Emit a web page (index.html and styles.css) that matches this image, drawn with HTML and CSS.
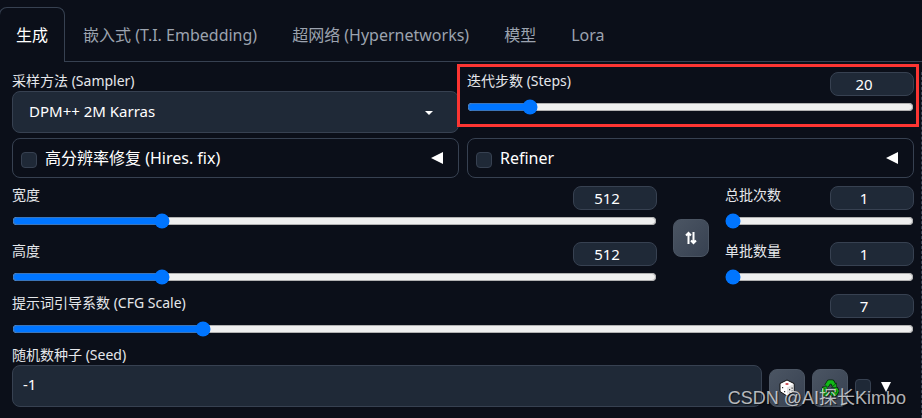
FILE: index.html
```html
<!DOCTYPE html>
<html lang="zh-CN">
<head>
<meta charset="utf-8">
<meta name="viewport" content="width=device-width, initial-scale=1">
<title>生成</title>
<link rel="stylesheet" href="styles.css">
</head>
<body>
<nav class="tabs">
  <button type="button" class="tab tab-active">生成</button>
  <button type="button" class="tab">嵌入式 (T.I. Embedding)</button>
  <button type="button" class="tab">超网络 (Hypernetworks)</button>
  <button type="button" class="tab">模型</button>
  <button type="button" class="tab">Lora</button>
</nav>
<main class="panel">
  <div class="halves">
    <div class="field">
      <label class="label" for="sampler">采样方法 (Sampler)</label>
      <div class="select-wrap">
        <select id="sampler" class="box select"><option>DPM++ 2M Karras</option></select>
        <svg class="caret" viewBox="0 0 8 4" aria-hidden="true"><path d="M0 0h8L4 4z"/></svg>
      </div>
    </div>
    <div class="slider highlighted">
      <div class="slider-head">
        <label class="label" for="steps">迭代步数 (Steps)</label>
        <input class="number" type="number" value="20" aria-label="迭代步数 (Steps)">
      </div>
      <input id="steps" class="range" type="range" min="1" max="150" value="20">
    </div>
  </div>

  <div class="halves accordions">
    <div class="accordion">
      <input id="hires" class="check" type="checkbox">
      <label class="accordion-label" for="hires">高分辨率修复 (Hires. fix)</label>
      <svg class="arrow" viewBox="0 0 12 12" aria-hidden="true"><path d="M12 0v12L0 6z"/></svg>
    </div>
    <div class="accordion">
      <input id="refiner" class="check" type="checkbox">
      <label class="accordion-label" for="refiner">Refiner</label>
      <svg class="arrow" viewBox="0 0 12 12" aria-hidden="true"><path d="M12 0v12L0 6z"/></svg>
    </div>
  </div>

  <div class="dimensions">
    <div class="stack stack-size">
      <div class="slider">
        <div class="slider-head">
          <label class="label" for="width">宽度</label>
          <input class="number" type="number" value="512" aria-label="宽度">
        </div>
        <input id="width" class="range" type="range" min="64" max="2048" step="8" value="512">
      </div>
      <div class="slider">
        <div class="slider-head">
          <label class="label" for="height">高度</label>
          <input class="number" type="number" value="512" aria-label="高度">
        </div>
        <input id="height" class="range" type="range" min="64" max="2048" step="8" value="512">
      </div>
    </div>
    <button type="button" class="tool" aria-label="⇅">
      <svg class="swap" viewBox="0 0 14 14" aria-hidden="true"><path d="M4.500 13V2M2 4.500L4.500 2 7 4.500M9.500 1v11M7 9.500L9.500 12 12 9.500"/></svg>
    </button>
    <div class="stack stack-batch">
      <div class="slider">
        <div class="slider-head">
          <label class="label" for="count">总批次数</label>
          <input class="number" type="number" value="1" aria-label="总批次数">
        </div>
        <input id="count" class="range" type="range" min="1" max="100" value="1">
      </div>
      <div class="slider">
        <div class="slider-head">
          <label class="label" for="size">单批数量</label>
          <input class="number" type="number" value="1" aria-label="单批数量">
        </div>
        <input id="size" class="range" type="range" min="1" max="8" value="1">
      </div>
    </div>
  </div>

  <div class="slider">
    <div class="slider-head">
      <label class="label" for="cfg">提示词引导系数 (CFG Scale)</label>
      <input class="number" type="number" value="7" aria-label="提示词引导系数 (CFG Scale)">
    </div>
    <input id="cfg" class="range" type="range" min="1" max="30" step="0.5" value="7">
  </div>

  <div class="seed-row">
    <div class="field seed-field">
      <label class="label" for="seed">随机数种子 (Seed)</label>
      <input id="seed" class="box seed" type="text" value="-1">
    </div>
    <button type="button" class="tool" aria-label="🎲️">
      <svg class="emoji" viewBox="0 0 18 18" aria-hidden="true">
        <path d="M9 1l7 3.500v8L9 17l-7-4.500v-8z" fill="#fff" stroke="#111" stroke-width="1"/>
        <path d="M9 8.500l6.500-3.500v7.300L9 16.300z" fill="#e2e2e2"/>
        <ellipse cx="9" cy="5" rx="1.700" ry="1.100" fill="#c8474d"/>
        <path d="M4 8h1.200v1.200H4zM6 12h1.200v1.200H6zM11 10h1.200v1.200H11zM13.500 8.500h1.200v1.200h-1.200zM11 13h1.200v1.200H11zM13.500 11.500h1.200v1.200h-1.200z" fill="#333"/>
      </svg>
    </button>
    <button type="button" class="tool" aria-label="♻️">
      <svg class="emoji" viewBox="0 0 18 18" aria-hidden="true">
        <g fill="none" stroke-linejoin="round">
          <path d="M5.500 7L8 3h3.200l2 3.500M14.300 9l1.700 3-1.700 3H10.500M7 15H3.500L2 12l2-3.500" stroke="#05260a" stroke-width="5"/>
          <path d="M5.500 7L8 3h3.200l2 3.500M14.300 9l1.700 3-1.700 3H10.500M7 15H3.500L2 12l2-3.500" stroke="#11b916" stroke-width="3.400"/>
        </g>
        <path d="M15.500 4v4.500h-5zM11.500 11v6.500L8.500 15zM1 8.500l4.500-1.500 1.500 4.500z" fill="#11b916" stroke="#05260a" stroke-width=".6"/>
      </svg>
    </button>
    <input class="check extra" type="checkbox" aria-label="▼">
    <svg class="arrow arrow-down" viewBox="0 0 12 12" aria-hidden="true"><path d="M1 1h10L6 11z"/></svg>
  </div>
</main>
<div class="watermark">CSDN @AI探长Kimbo</div>
</body>
</html>
```
FILE: styles.css
```css
* {
  box-sizing: border-box;
}

body {
  position: relative;
  min-height: 100vh;
  margin: 0;
  padding-top: 7px;
  display: flex;
  flex-direction: column;
  overflow: hidden;
  background: #0b0f19;
  color: #fff;
  font: 14px/18px "Noto Sans", "Noto Sans CJK SC", sans-serif;
}

button,
input,
select {
  margin: 0;
  color: inherit;
  font: inherit;
}

.tabs {
  display: flex;
  gap: 1px;
  margin-left: -1px;
  box-shadow: inset 0 -1px #374151;
}

.tab {
  height: 55px;
  padding: 0 16px;
  border: 1px solid transparent;
  border-bottom: 0;
  border-radius: 8px 8px 0 0;
  background: none;
  color: #9ca3af;
  font-size: 16px;
  white-space: nowrap;
}

.tab-active {
  border-color: #374151;
  background: #0b0f19;
  color: #fff;
}

.panel {
  flex: 1;
  margin-top: 10px;
  padding: 0 7px 10px 12px;
  border-right: 1px dashed #374151;
}

.halves {
  display: grid;
  grid-template-columns: 1fr 1fr;
  gap: 8px;
}

.field {
  display: flex;
  flex-direction: column;
  min-width: 0;
}

.label {
  color: #e5e7eb;
  white-space: nowrap;
}

.box {
  width: 100%;
  height: 42px;
  border: 1px solid #374151;
  border-radius: 8px;
  background: #1f2937;
}

.select-wrap {
  position: relative;
  margin-top: 1px;
}

.select {
  display: block;
  padding: 0 32px 2px 16px;
  font-size: 15px;
  appearance: none;
}

.caret {
  position: absolute;
  top: 20px;
  right: 26px;
  width: 8px;
  height: 4px;
  fill: #fff;
  pointer-events: none;
}

.slider-head {
  display: flex;
  justify-content: space-between;
  align-items: flex-start;
}

.number {
  width: 84px;
  height: 24px;
  padding: 0 16px 0 0;
  border: 1px solid #374151;
  border-radius: 8px;
  background: #1f2937;
  font-size: 15px;
  text-align: center;
  appearance: textfield;
}

.number::-webkit-inner-spin-button {
  display: none;
}

.range {
  display: block;
  width: 100%;
  height: 16px;
  margin-top: 3px;
}

.highlighted {
  position: relative;
  align-self: start;
}

.highlighted::after {
  content: "";
  position: absolute;
  inset: -8px -5px -12px -10px;
  border: 3px solid #fc3532;
  pointer-events: none;
}

.accordions {
  margin-top: 5px;
}

.accordion {
  display: flex;
  align-items: center;
  height: 40px;
  padding: 0 15px 0 8px;
  border: 1px solid #374151;
  border-radius: 8px;
}

.accordion-label {
  flex: 1;
  margin-left: 8px;
  font-size: 16px;
}

.check {
  width: 16px;
  height: 16px;
  border: 1px solid #374151;
  border-radius: 4px;
  background: #1f2937;
  appearance: none;
}

.accordion .check {
  margin-top: 4px;
}

.arrow {
  width: 12px;
  height: 12px;
  fill: #fff;
}

.dimensions {
  display: flex;
  align-items: center;
  gap: 16px;
  margin: 8px 0 9px;
}

.dimensions .tool {
  margin-top: 4px;
}

.stack {
  display: grid;
  gap: 13px;
}

.stack-size {
  flex: 645;
}

.stack-batch {
  flex: 189;
}

.tool {
  display: flex;
  flex: none;
  align-items: center;
  justify-content: center;
  width: 36px;
  height: 38px;
  padding: 0;
  border: 1px solid #4b5563;
  border-radius: 8px;
  background: linear-gradient(to bottom right, #4b5563, #374151);
}

.swap {
  width: 14px;
  height: 14px;
  fill: none;
  stroke: #fff;
  stroke-width: 2;
}

.emoji {
  width: 18px;
  height: 18px;
}

.seed-row {
  display: flex;
  align-items: flex-end;
  gap: 7px;
  margin-top: 9px;
}

.seed-field {
  flex: 1;
  gap: 1px;
}

.seed {
  padding: 0 10px 4px;
  font-size: 15px;
}

.extra {
  margin-bottom: 12px;
}

.arrow-down {
  margin: 0 22px 14px 2px;
}

.watermark {
  position: absolute;
  right: 16px;
  bottom: 8px;
  color: rgba(255, 255, 255, 0.7);
  font: 18px/24px "Liberation Sans", "Noto Sans CJK SC", sans-serif;
  text-shadow: 1px 1px 1px rgba(0, 0, 0, 0.6);
  pointer-events: none;
}
```
